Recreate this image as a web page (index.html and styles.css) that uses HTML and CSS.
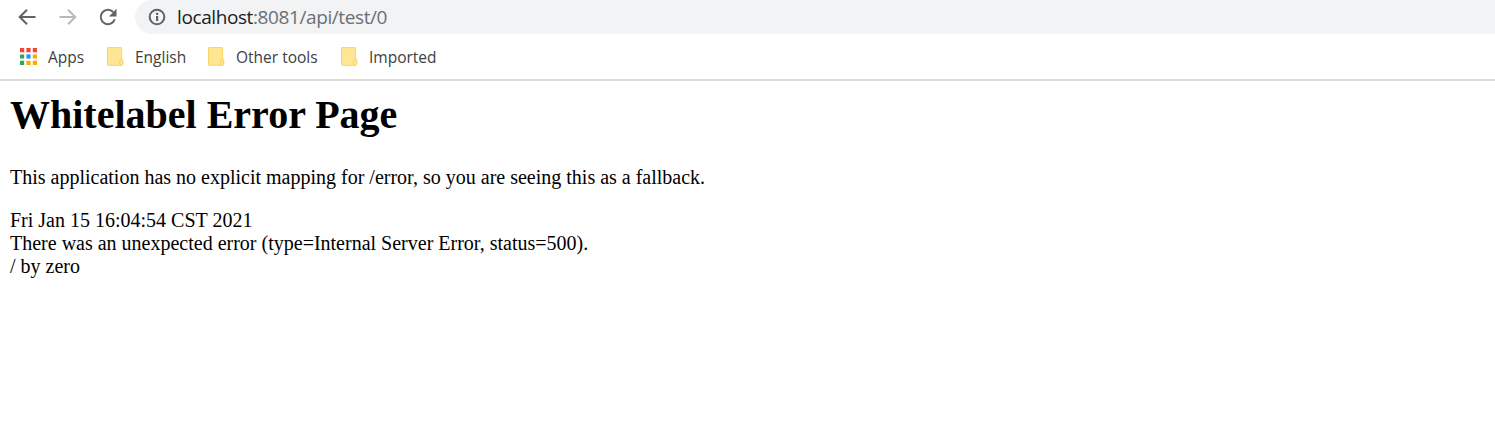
FILE: index.html
```html
<!DOCTYPE html>
<html lang="en">
<head>
<meta charset="utf-8">
<title>Whitelabel Error Page</title>
<link rel="stylesheet" href="styles.css">
</head>
<body>
<div class="toolbar">
  <svg class="nav back" viewBox="0 0 24 24"><path d="M20.5 12H5M12 4.7L4.7 12l7.3 7.3"/></svg>
  <svg class="nav forward" viewBox="0 0 24 24"><path d="M3.5 12H19M12 4.7l7.3 7.3-7.3 7.3"/></svg>
  <svg class="nav reload" viewBox="0 0 24 24"><path d="M18.8 14.2A7.2 7.2 0 1 1 17.2 7"/><path class="tip" d="M20.5 3.8v7.6h-7.6z"/></svg>
  <div class="address">
    <svg class="info" viewBox="0 0 20 20"><circle class="ring" cx="10" cy="10" r="7.3"/><path d="M9 9h2.2v5H9zM9 5.8h2.2V8H9z"/></svg>
    <span class="url"><span class="host">localhost</span>:8081/api/test/0</span>
  </div>
</div>
<nav class="bookmarks">
  <div class="bookmark apps">
    <svg class="grid" viewBox="0 0 17 17"><path fill="#f44336" d="M0 0h4.2v4.2H0zM6.4 0h4.2v4.2H6.4zM12.8 0H17v4.2h-4.2z"/><path fill="#34a35a" d="M0 6.4h4.2v4.2H0zM0 12.8h4.2V17H0z"/><path fill="#2196f3" d="M6.4 6.4h4.2v4.2H6.4z"/><path fill="#f9ab00" d="M12.8 6.4H17v4.2h-4.2zM6.4 12.8h4.2V17H6.4zM12.8 12.8H17V17h-4.2z"/></svg>
    <span class="label">Apps</span>
  </div>
  <div class="bookmark english"><svg class="folder" viewBox="0 0 17 19"><path d="M1 .6h13q.6 0 .6.6v10.9q1.2-.1 1.2 1.2v4q0 1-1 1H1q-.5 0-.5-.5V1.1Q.5.6 1 .6z"/><path d="M14.6 12.1q-1.9-.1-1.9 1.5v3q0 1.5 1.3 1.7"/></svg><span class="label">English</span></div>
  <div class="bookmark other"><svg class="folder" viewBox="0 0 17 19"><path d="M1 .6h13q.6 0 .6.6v10.9q1.2-.1 1.2 1.2v4q0 1-1 1H1q-.5 0-.5-.5V1.1Q.5.6 1 .6z"/><path d="M14.6 12.1q-1.9-.1-1.9 1.5v3q0 1.5 1.3 1.7"/></svg><span class="label">Other tools</span></div>
  <div class="bookmark imported"><svg class="folder" viewBox="0 0 17 19"><path d="M1 .6h13q.6 0 .6.6v10.9q1.2-.1 1.2 1.2v4q0 1-1 1H1q-.5 0-.5-.5V1.1Q.5.6 1 .6z"/><path d="M14.6 12.1q-1.9-.1-1.9 1.5v3q0 1.5 1.3 1.7"/></svg><span class="label">Imported</span></div>
</nav>
<main class="page">
  <h1>Whitelabel Error Page</h1>
  <p>This application has no explicit mapping for /error, so you are seeing this as a fallback.</p>
  <div>Fri Jan 15 16:04:54 CST 2021</div>
  <div>There was an unexpected error (type=Internal Server Error, status=500).</div>
  <div>/ by zero</div>
</main>
</body>
</html>
```
FILE: styles.css
```css
body { margin: 0; background: #fff; height: 430px; overflow: hidden; }
.toolbar { display: flex; align-items: center; height: 34px; }
.nav { width: 24px; height: 24px; margin-bottom: 1px; fill: none; stroke: #5f6368; stroke-width: 2; flex: none; }
.back { margin-left: 15px; }
.forward { margin-left: 17px; stroke: #bababa; }
.reload { margin-left: 16px; }
.tip { fill: #5f6368; stroke: none; }
.address { flex: 1; display: flex; align-items: center; box-sizing: border-box; height: 34px; margin-left: 15px; padding: 0 0 1px 12px; background: #f1f3f4; border-radius: 17px 0 0 17px; }
.info { width: 20px; height: 20px; fill: #5f6368; flex: none; }
.ring { fill: none; stroke: #5f6368; stroke-width: 2; }
.url { margin-left: 10px; font: 19px/24px "Open Sans", sans-serif; letter-spacing: -0.4px; color: #6b6f73; white-space: nowrap; }
.host { color: #202124; }
.bookmarks { display: flex; height: 45px; border-bottom: 2px solid #dadce0; }
.bookmark { display: flex; align-items: center; }
.apps { width: 87px; padding-left: 20px; }
.grid { width: 17px; height: 17px; margin-right: 11px; }
.english { width: 101px; }
.other { width: 133px; }
.folder { width: 17px; height: 19px; margin-right: 11px; fill: #ffe694; stroke: #f5d563; stroke-width: 1; }
.label { font: 15.5px/20px "Open Sans", sans-serif; color: #3c4043; white-space: nowrap; }
.page { padding: 11px 10px; font: 20px/23px "Liberation Serif", serif; color: #000; }
h1 { margin: 0; font-size: 40px; line-height: 46px; }
p { margin: 28px 0 20px; }
```
